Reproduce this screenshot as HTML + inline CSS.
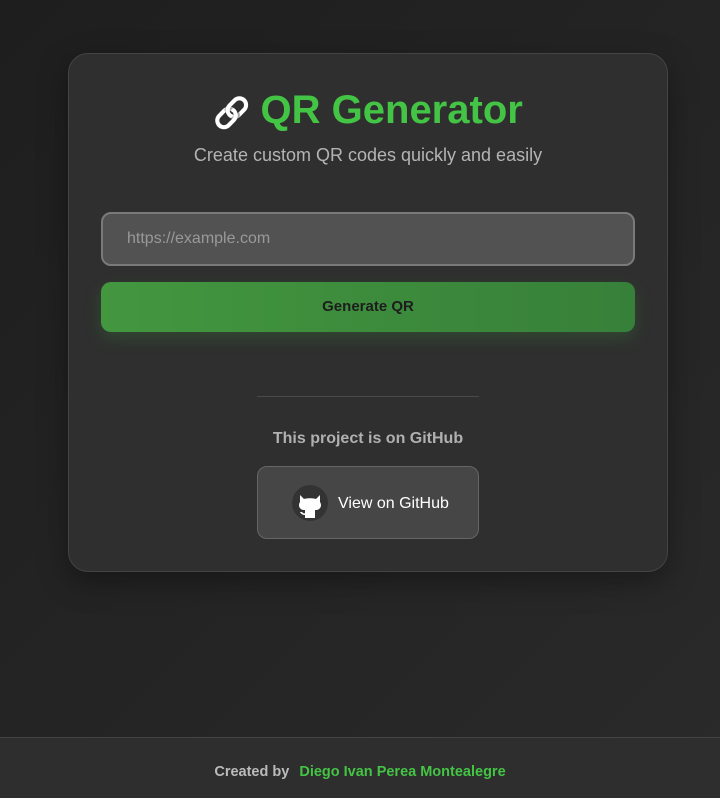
<!DOCTYPE html>
<html><head><style>
*{box-sizing:border-box;margin:0;padding:0}
html,body{width:720px;height:798px;overflow:hidden}
body{background:linear-gradient(135deg,#1e1e1e,#2a2a2a);font-family:"Liberation Sans",sans-serif;position:relative}
.card{position:absolute;left:68px;top:53px;width:600px;height:519px;border-radius:20px;background:#2f2f2f;border:1px solid #444;box-shadow:0 10px 30px rgba(0,0,0,.35)}
h1{position:absolute;top:34px;left:0;right:0;text-align:center;font-size:40px;font-weight:bold;color:#44c444}
h1 span{font-size:30px;color:#d0cce0;margin-right:10px;filter:grayscale(1) brightness(1.6)}
.sub{position:absolute;top:91px;left:0;right:0;text-align:center;font-size:18px;color:#b4b4b4}
.input{position:absolute;left:32px;top:158px;width:534px;height:54px;border-radius:10px;background:#525252;border:2px solid #7a7a7a;color:#999;font-size:16px;padding:16px 24px}
.btn{position:absolute;left:32px;top:228px;width:534px;height:50px;border-radius:10px;background:linear-gradient(90deg,#43973f,#37803a);color:#1d1d1d;font-weight:bold;font-size:15px;text-align:center;line-height:50px;box-shadow:0 6px 16px rgba(60,150,60,.25)}
.hr{position:absolute;left:188px;top:342px;width:222px;height:1px;background:#4a4a4a}
.gt{position:absolute;top:376px;left:0;right:0;text-align:center;font-size:16px;color:#b0b0b0;font-weight:bold}
.gh{position:absolute;left:188px;top:412px;width:222px;height:73px;border-radius:10px;background:#464646;border:1px solid #666;color:#fff;font-size:16px}
.ic{position:absolute;left:34px;top:18px;width:36px;height:36px;border-radius:50%;background:#333}
.gh .t{position:absolute;left:80px;top:28px}
.foot{position:absolute;left:0;top:737px;width:720px;height:61px;background:#2e2e2e;border-top:1px solid #444;text-align:center;line-height:68px;font-size:14.5px;color:#bbb;font-weight:bold}
.foot b{color:#44c444;margin-left:6px}
</style></head><body>
<div class="card">
<h1><span>🔗</span>QR Generator</h1>
<div class="sub">Create custom QR codes quickly and easily</div>
<div class="input">https://example.com</div>
<div class="btn">Generate QR</div>
<div class="hr"></div>
<div class="gt">This project is on GitHub</div>
<div class="gh"><div class="ic"><svg width="36" height="36" viewBox="0 0 36 36"><path fill="#fff" d="M8 10l4 4c3-1 9-1 12 0l4-4v7c2 3 1 7-3 8h-2v8h-10v-3c-2 0-4-1-5-3h2c1 1 2 2 3 1v-3h-2c-4-1-5-5-3-8z"/></svg></div><span class="t">View on GitHub</span></div>
</div>
<div class="foot">Created by <b>Diego Ivan Perea Montealegre</b></div>
</body></html>
